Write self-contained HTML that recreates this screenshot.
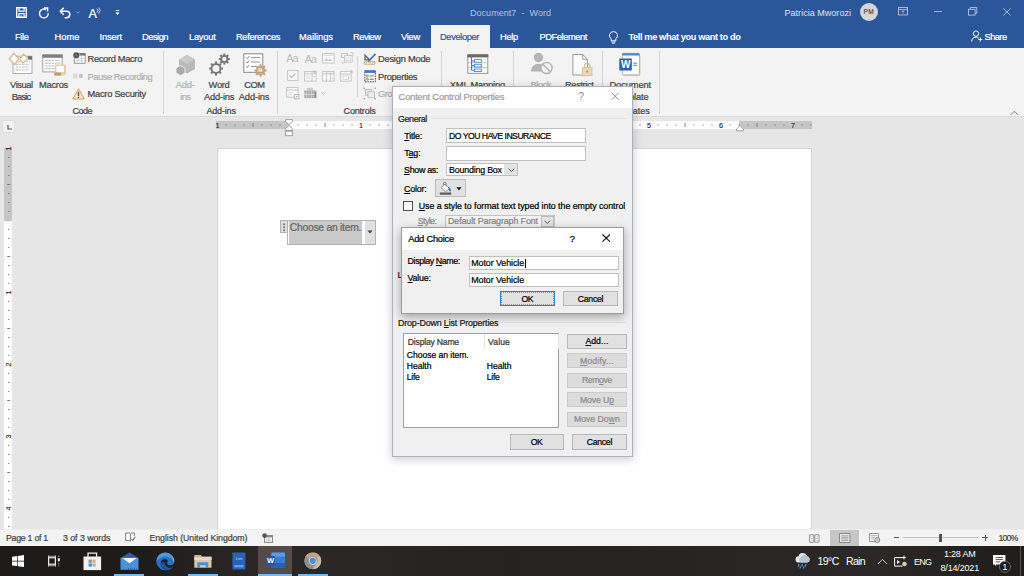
<!DOCTYPE html>
<html>
<head>
<meta charset="utf-8">
<title>Document7 - Word</title>
<style>
*{box-sizing:border-box;margin:0;padding:0}
html,body{width:1024px;height:576px;overflow:hidden;background:#e6e6e6;font-family:"Liberation Sans",sans-serif;font-size:9px;color:#333}
#root{position:relative;width:1024px;height:576px;overflow:hidden}
#root div,#root span,#root svg{position:absolute;white-space:nowrap}
#root svg{overflow:visible}
#root span{-webkit-text-stroke:0.22px currentColor}
#titlebar{left:0;top:0;width:1024px;height:48px;background:#2b579a}
#ribbon{left:0;top:48px;width:1024px;height:69px;background:#f3f3f3;border-bottom:1px solid #dadada}
#docarea{left:0;top:117px;width:1024px;height:412px;background:#e6e6e6}
#status{left:0;top:529px;width:1024px;height:17px;background:#f3f3f3;border-top:1px solid #ededed}
#taskbar{left:0;top:546px;width:1024px;height:30px;background:linear-gradient(90deg,#1d1b1a 0%,#1e1c1b 14%,#282524 22%,#2a2726 32%,#252221 50%,#282524 70%,#2b2827 86%,#211f1e 97%,#1f1d1c 100%)}
u{text-decoration:underline;text-underline-offset:1px;text-decoration-thickness:0.8px}
</style>
</head>
<body>
<div id="root">
<div id="titlebar"></div>
<svg style="left:16.00px;top:7.00px;" width="11" height="11" viewBox="0 0 11 11"><path d="M0.700 0.700h9.600v9.600h-9.600z" fill="none" stroke="#fff" stroke-width="1.400"/><path d="M2.900 0.700v3.400h5.200v-3.400M2.900 10.300v-3.600h5.200v3.600" fill="none" stroke="#fff" stroke-width="1.200"/><path d="M5 8.300v2" stroke="#fff" stroke-width="1.100"/></svg>
<svg style="left:37.50px;top:6.50px;" width="12" height="12" viewBox="0 0 12 12"><path d="M8 2.600A4.400 4.400 0 1 0 10.300 6.300" fill="none" stroke="#fff" stroke-width="1.400"/><path d="M6 1h3.600v3.600" fill="none" stroke="#fff" stroke-width="1.400"/></svg>
<svg style="left:59.00px;top:6.50px;" width="13" height="12" viewBox="0 0 13 12"><path d="M1.400 4.300h6.200a3.200 3.200 0 0 1 0 6.400h-1.900" fill="none" stroke="#fff" stroke-width="1.500"/><path d="M4.700 0.900L1.300 4.300l3.400 3.400" fill="none" stroke="#fff" stroke-width="1.500"/></svg>
<svg style="left:75.50px;top:11.00px;" width="4" height="3" viewBox="0 0 4 3"><path d="M0.300 0.400L2 2.200L3.700 0.400" fill="none" stroke="#8fa6cf" stroke-width="0.8"/></svg>
<span style="left:88.50px;top:7.00px;font-size:12.5px;line-height:15px;color:#fff;letter-spacing:-0.337px;">A</span>
<svg style="left:96.00px;top:6.50px;" width="6" height="8" viewBox="0 0 6 8"><path d="M1 1.5q1.6 2 0 4.2M2.8 0.5q2.4 3 0 6.2" fill="none" stroke="#dfe6f2" stroke-width="0.8"/></svg>
<svg style="left:114.50px;top:10.00px;" width="5" height="6" viewBox="0 0 5 6"><path d="M0.7 0.6h3.6" stroke="#fff" stroke-width="0.9"/><path d="M0.4 2.6h4.2L2.5 5z" fill="#fff"/></svg>
<span style="left:470.00px;top:8.00px;font-size:9px;line-height:11px;color:#b4c3de;letter-spacing:0.035px;white-space:pre;-webkit-text-stroke:0;">Document7  -  Word</span>
<span style="left:784.50px;top:8.00px;font-size:9px;line-height:11px;color:#dde5f1;letter-spacing:0.030px;-webkit-text-stroke:0;">Patricia Mworozi</span>
<div style="left:859.50px;top:2.50px;width:18.00px;height:18.00px;background:#d6d6d6;border-radius:9px;"><span style="left:4.00px;top:5.00px;font-size:6.5px;line-height:8px;color:#555;letter-spacing:0.375px;">PM</span></div>
<svg style="left:898.00px;top:7.00px;" width="10" height="9" viewBox="0 0 10 9"><rect x="0.500" y="0.500" width="9" height="7.400" fill="none" stroke="#b7c4dc" stroke-width="0.9"/><path d="M0.500 2.600h9" stroke="#b7c4dc" stroke-width="0.9"/><path d="M5 3.800v2.800M3.700 5L5 3.700L6.300 5" fill="none" stroke="#b7c4dc" stroke-width="0.7"/></svg>
<div style="left:934.00px;top:11.20px;width:7.50px;height:0.90px;background:#9fb1d2;"></div>
<svg style="left:968.00px;top:7.00px;" width="10" height="9" viewBox="0 0 10 9"><rect x="0.500" y="2.300" width="6.600" height="5.800" fill="none" stroke="#b7c4dc" stroke-width="0.9"/><path d="M2.300 2.300v-1.800h6.500v5.800h-1.700" fill="none" stroke="#b7c4dc" stroke-width="0.9"/></svg>
<svg style="left:1003.00px;top:7.50px;" width="8" height="8" viewBox="0 0 8 8"><path d="M0.300 0.300L7.600 7.600M7.600 0.300L0.300 7.600" stroke="#b7c4dc" stroke-width="0.9"/></svg>
<span style="left:15.00px;top:31.00px;font-size:9.3px;line-height:12px;color:#fff;letter-spacing:-0.371px;">File</span>
<span style="left:54.50px;top:31.00px;font-size:9.3px;line-height:12px;color:#fff;letter-spacing:0.048px;">Home</span>
<span style="left:99.50px;top:31.00px;font-size:9.3px;line-height:12px;color:#fff;letter-spacing:-0.127px;">Insert</span>
<span style="left:142.00px;top:31.00px;font-size:9.3px;line-height:12px;color:#fff;letter-spacing:-0.491px;">Design</span>
<span style="left:189.00px;top:31.00px;font-size:9.3px;line-height:12px;color:#fff;letter-spacing:-0.237px;">Layout</span>
<span style="left:236.00px;top:31.00px;font-size:9.3px;line-height:12px;color:#fff;letter-spacing:-0.356px;">References</span>
<span style="left:299.00px;top:31.00px;font-size:9.3px;line-height:12px;color:#fff;letter-spacing:-0.014px;">Mailings</span>
<span style="left:353.00px;top:31.00px;font-size:9.3px;line-height:12px;color:#fff;letter-spacing:-0.499px;">Review</span>
<span style="left:401.00px;top:31.00px;font-size:9.3px;line-height:12px;color:#fff;letter-spacing:-0.247px;">View</span>
<div style="left:431.00px;top:25.00px;width:59.00px;height:23.00px;background:#f3f3f3;"></div>
<span style="left:440.00px;top:31.00px;font-size:9.3px;line-height:12px;color:#2b579a;letter-spacing:-0.377px;">Developer</span>
<span style="left:500.00px;top:31.00px;font-size:9.3px;line-height:12px;color:#fff;letter-spacing:-0.282px;">Help</span>
<span style="left:539.50px;top:31.00px;font-size:9.3px;line-height:12px;color:#fff;letter-spacing:-0.419px;">PDFelement</span>
<svg style="left:608.30px;top:31.00px;" width="11" height="13" viewBox="0 0 11 13"><path d="M5.500 0.600a4 4 0 0 1 2.300 7.300v1.900h-4.600v-1.900a4 4 0 0 1 2.300-7.300z" fill="none" stroke="#fff" stroke-width="0.95"/><path d="M3.400 11h4.200M4 12.200h3" stroke="#fff" stroke-width="0.8"/></svg>
<span style="left:628.50px;top:31.00px;font-size:9.3px;line-height:12px;color:#fff;letter-spacing:-0.419px;font-weight:bold;-webkit-text-stroke:0;">Tell me what you want to do</span>
<svg style="left:970.50px;top:30.00px;" width="12" height="13" viewBox="0 0 12 13"><circle cx="5" cy="3.6" r="2.7" fill="none" stroke="#fff" stroke-width="0.95"/><path d="M0.6 11.5a4.4 4.4 0 0 1 7.2-3.4" fill="none" stroke="#fff" stroke-width="0.95"/><path d="M9.3 7.5v4M7.3 9.5h4" stroke="#fff" stroke-width="0.95"/></svg>
<span style="left:984.50px;top:31.00px;font-size:9.3px;line-height:12px;color:#fff;letter-spacing:-0.563px;">Share</span>
<div id="ribbon"></div>
<div style="left:163.00px;top:51.00px;width:1.00px;height:63.00px;background:#d5d5d5;"></div>
<div style="left:277.00px;top:51.00px;width:1.00px;height:63.00px;background:#d5d5d5;"></div>
<div style="left:357.00px;top:55.50px;width:1.00px;height:41.00px;background:#d5d5d5;"></div>
<div style="left:441.00px;top:51.00px;width:1.00px;height:63.00px;background:#d5d5d5;"></div>
<div style="left:512.50px;top:51.00px;width:1.00px;height:63.00px;background:#d5d5d5;"></div>
<div style="left:601.50px;top:51.00px;width:1.00px;height:63.00px;background:#d5d5d5;"></div>
<div style="left:659.00px;top:51.00px;width:1.00px;height:63.00px;background:#d5d5d5;"></div>
<svg style="left:9.00px;top:52.00px;" width="24" height="23" viewBox="0 0 24 23"><rect x="4" y="4.200" width="19" height="17.300" fill="#fdfdfd" stroke="#a3a3a3" stroke-width="0.9"/><rect x="18.800" y="4.200" width="4.200" height="3.400" fill="#6f6f6f"/><path d="M6.500 9.500h14M6.500 12.300h14M6.500 15.100h14M6.500 17.900h14" stroke="#c2c2c2" stroke-width="1" stroke-dasharray="2.600 0.700"/><path d="M6.500 12.300h3M6.500 17.900h3" stroke="#e2c48f" stroke-width="1"/><path d="M4.700 1.300L10 6.800L5.400 12.600L0.400 7z" fill="#fffdf9" stroke="#d6bd96" stroke-width="1.300" stroke-linejoin="round"/><path d="M14.700 2.300L18.600 6.400L14.300 11L10.600 6.700z" fill="#fffdf9" stroke="#d6bd96" stroke-width="1.300" stroke-linejoin="round"/></svg>
<span style="left:10.00px;top:79.00px;font-size:9.3px;line-height:12px;color:#444;letter-spacing:-0.394px;">Visual</span>
<span style="left:11.70px;top:91.00px;font-size:9.3px;line-height:12px;color:#444;letter-spacing:-0.788px;">Basic</span>
<svg style="left:42.00px;top:53.50px;" width="25" height="22" viewBox="0 0 25 22"><rect x="0.800" y="0.900" width="19.400" height="17" fill="#fdfdfd" stroke="#9a9a9a" stroke-width="0.9"/><rect x="0.400" y="0.500" width="20.200" height="3.300" fill="#808080"/><path d="M3 6.500h15M3 9.200h15M3 11.900h15M3 14.600h10" stroke="#bdbdbd" stroke-width="1" stroke-dasharray="2.600 0.700"/><path d="M3 9.200h3M3 14.600h3" stroke="#e2c48f" stroke-width="1"/><path d="M13 10.500h11v9l-1.500 2h-10.200v-3z" fill="#e5d0ad"/><rect x="14" y="11.300" width="8.300" height="7.400" fill="#fffdfa" stroke="#dcc6a1" stroke-width="0.8"/><path d="M12.400 18.600h6.600v3h-6.600z" fill="#b99c72"/></svg>
<span style="left:39.00px;top:79.00px;font-size:9.3px;line-height:12px;color:#444;letter-spacing:-0.248px;">Macros</span>
<svg style="left:72.50px;top:52.00px;" width="13" height="12" viewBox="0 0 13 12"><rect x="1.300" y="1.600" width="10.900" height="9.700" fill="#fdfdfd" stroke="#8f8f8f" stroke-width="0.9"/><rect x="6.500" y="1.300" width="6" height="2.300" fill="#777"/><path d="M2 6.300h10M2 8.700h10M5 4v7M8.600 4v7" stroke="#c9c9c9" stroke-width="0.7"/><circle cx="3.300" cy="3.200" r="3" fill="#5b514a"/><circle cx="3.300" cy="3.200" r="1" fill="#8d7f70"/></svg>
<span style="left:87.50px;top:53.00px;font-size:9.3px;line-height:12px;color:#444;letter-spacing:-0.325px;">Record Macro</span>
<svg style="left:73.00px;top:73.00px;" width="11" height="6" viewBox="0 0 11 6"><path d="M1 0.500v5M3.300 0.500v5" stroke="#c4c4c4" stroke-width="1.100"/><circle cx="7.800" cy="3" r="2.200" fill="#c4c4c4"/></svg>
<span style="left:87.50px;top:71.00px;font-size:9.3px;line-height:12px;color:#b1b1b1;letter-spacing:-0.436px;">Pause Recording</span>
<svg style="left:72.00px;top:87.50px;" width="13" height="12" viewBox="0 0 13 12"><path d="M6.500 0.800L12.300 11H0.700z" fill="#f5e3c1" stroke="#c9a671" stroke-width="1"/><path d="M6.500 3.800v4.200" stroke="#555" stroke-width="1.300"/><circle cx="6.500" cy="9.500" r="0.800" fill="#555"/></svg>
<span style="left:87.50px;top:88.00px;font-size:9.3px;line-height:12px;color:#444;letter-spacing:-0.251px;">Macro Security</span>
<span style="left:72.50px;top:106.00px;font-size:9px;line-height:11px;color:#444;letter-spacing:-0.504px;">Code</span>
<svg style="left:174.50px;top:53.50px;" width="21" height="22" viewBox="0 0 21 22"><path d="M12 1L20 5.500V15L12 19.500L4 15V5.500z" fill="#b9b9b9"/><path d="M12 1L20 5.500L12 10L4 5.500z" fill="#cacaca"/><path d="M5.500 11.500L10 14V19L5.500 21.500L1 19V14z" fill="#a9a9a9" stroke="#f3f3f3" stroke-width="0.8"/></svg>
<span style="left:175.80px;top:79.00px;font-size:9.3px;line-height:12px;color:#b1b1b1;letter-spacing:-0.161px;">Add-</span>
<span style="left:180.20px;top:91.00px;font-size:9.3px;line-height:12px;color:#b1b1b1;letter-spacing:-0.529px;">ins</span>
<svg style="left:207.50px;top:52.50px;" width="23" height="24" viewBox="0 0 23 24"><path d="M12.70 15.50L14.90 15.50M11.32 18.82L12.88 20.38M8.00 20.20L8.00 22.40M4.68 18.82L3.12 20.38M3.30 15.50L1.10 15.50M4.68 12.18L3.12 10.62M8.00 10.80L8.00 8.60M11.32 12.18L12.88 10.62" stroke="#787878" stroke-width="2.100"/><circle cx="8" cy="15.5" r="4.5" fill="none" stroke="#787878" stroke-width="1.900"/><path d="M19.60 6.00L21.80 6.00M18.63 8.33L20.19 9.89M16.30 9.30L16.30 11.50M13.97 8.33L12.41 9.89M13.00 6.00L10.80 6.00M13.97 3.67L12.41 2.11M16.30 2.70L16.30 0.50M18.63 3.67L20.19 2.11" stroke="#787878" stroke-width="2.100"/><circle cx="16.3" cy="6" r="3.1" fill="none" stroke="#787878" stroke-width="1.900"/></svg>
<span style="left:208.60px;top:79.00px;font-size:9.3px;line-height:12px;color:#444;letter-spacing:-0.288px;">Word</span>
<span style="left:204.00px;top:91.00px;font-size:9.3px;line-height:12px;color:#444;letter-spacing:-0.190px;">Add-ins</span>
<svg style="left:242.50px;top:52.50px;" width="25" height="25" viewBox="0 0 25 25"><rect x="0.800" y="0.800" width="19" height="18.500" fill="#fdfdfd" stroke="#7d7d7d" stroke-width="0.9"/><path d="M8 4.500h9M8 9h9M8 13.500h5" stroke="#8a8a8a" stroke-width="0.9"/><path d="M3 4.300l1.200 1.200l2-2.400M3 8.800l1.200 1.200l2-2.400M3 13.300l1.200 1.200l2-2.400" fill="none" stroke="#777" stroke-width="0.9"/><path d="M21.50 17.50L23.70 17.50M20.33 20.33L21.88 21.88M17.50 21.50L17.50 23.70M14.67 20.33L13.12 21.88M13.50 17.50L11.30 17.50M14.67 14.67L13.12 13.12M17.50 13.50L17.50 11.30M20.33 14.67L21.88 13.12" stroke="#c3a47a" stroke-width="2.100"/><circle cx="17.5" cy="17.5" r="3.8" fill="none" stroke="#c3a47a" stroke-width="1.900"/><circle cx="17.500" cy="17.500" r="2.300" fill="#c3a47a"/><rect x="16" y="16.500" width="3.200" height="2" fill="#fff"/></svg>
<span style="left:244.20px;top:79.00px;font-size:9.3px;line-height:12px;color:#444;letter-spacing:-0.499px;">COM</span>
<span style="left:238.80px;top:91.00px;font-size:9.3px;line-height:12px;color:#444;letter-spacing:-0.133px;">Add-ins</span>
<span style="left:206.40px;top:106.00px;font-size:9px;line-height:11px;color:#444;letter-spacing:-0.159px;">Add-ins</span>
<span style="left:286.30px;top:52.00px;font-size:10.8px;line-height:13px;color:#bcbcbc;letter-spacing:-0.900px;-webkit-text-stroke:0;">Aa</span>
<span style="left:304.80px;top:53.00px;font-size:10.8px;line-height:13px;color:#bcbcbc;letter-spacing:-0.900px;-webkit-text-stroke:0;">Aa</span>
<svg style="left:322.00px;top:53.00px;" width="13" height="11" viewBox="0 0 13 11"><rect x="0.600" y="0.600" width="11.500" height="9.500" fill="#f8f8f8" stroke="#c2c2c2" stroke-width="0.9"/><path d="M2 8l2.500-3l2 2l1.500-1.500l2.500 2.500z" fill="#cfcfcf"/><path d="M1 2.300h10.500" stroke="#d9d9d9" stroke-width="0.9"/></svg>
<svg style="left:340.50px;top:52.00px;" width="13" height="12" viewBox="0 0 13 12"><rect x="0.600" y="1.600" width="6" height="4" fill="none" stroke="#c2c2c2" stroke-width="0.9"/><rect x="3.600" y="3.600" width="7.500" height="6.500" fill="#f8f8f8" stroke="#c2c2c2" stroke-width="0.9"/><path d="M5 6h4.500v2.500h-4.500z" fill="none" stroke="#d0d0d0" stroke-width="0.7"/><path d="M9 0.800h3v3" fill="none" stroke="#c2c2c2" stroke-width="0.8"/><path d="M0.800 9v2h2.500" fill="none" stroke="#c2c2c2" stroke-width="0.8"/></svg>
<svg style="left:286.50px;top:70.00px;" width="12" height="11" viewBox="0 0 12 11"><rect x="0.600" y="0.600" width="10.300" height="9.800" fill="#f9f9f9" stroke="#c2c2c2" stroke-width="0.95"/><path d="M2.800 5.500l2 2l3.600-4.200" fill="none" stroke="#b4b4b4" stroke-width="1.100"/></svg>
<svg style="left:304.00px;top:69.50px;" width="13" height="12" viewBox="0 0 13 12"><rect x="0.600" y="1.600" width="11.500" height="9.500" fill="#f9f9f9" stroke="#c2c2c2" stroke-width="0.9"/><path d="M0.600 3.800h11.500M8 1.600v9.500" stroke="#c2c2c2" stroke-width="0.9"/><path d="M2 6h4M2 8h4" stroke="#d4d4d4" stroke-width="0.8"/><path d="M9 6l1 1.200l1-1.200z" fill="#aaa"/><rect x="9.500" y="0.300" width="2" height="2.500" fill="#bdbdbd"/></svg>
<svg style="left:322.00px;top:69.50px;" width="13" height="12" viewBox="0 0 13 12"><rect x="0.600" y="1.600" width="11.500" height="9.500" fill="#f9f9f9" stroke="#c2c2c2" stroke-width="0.9"/><path d="M0.600 3.800h11.500M4.500 1.600v9.500M8.500 1.600v9.500" stroke="#c2c2c2" stroke-width="0.9"/><path d="M10 8l0.800 1l0.800-1z" fill="#aaa"/></svg>
<svg style="left:340.00px;top:69.50px;" width="13" height="12" viewBox="0 0 13 12"><rect x="0.600" y="1.600" width="10.500" height="9.500" fill="#f9f9f9" stroke="#c2c2c2" stroke-width="0.9"/><path d="M0.600 4h10.500" stroke="#c2c2c2" stroke-width="0.9"/><rect x="3" y="5.800" width="5.500" height="3.500" fill="none" stroke="#cfcfcf" stroke-width="0.8"/><rect x="10.300" y="0.300" width="2.200" height="2.500" fill="#c6c6c6"/></svg>
<svg style="left:286.00px;top:86.50px;" width="14" height="13" viewBox="0 0 14 13"><rect x="0.600" y="0.600" width="11.500" height="9.500" fill="#f9f9f9" stroke="#c2c2c2" stroke-width="0.9"/><path d="M0.600 3h11.500" stroke="#c2c2c2" stroke-width="0.9"/><path d="M2 5.500h5M2 7.500h4" stroke="#d9d9d9" stroke-width="0.8"/><rect x="8.600" y="7.600" width="4.300" height="4.300" fill="#f3f3f3" stroke="#b6b6b6" stroke-width="0.9"/><path d="M9.600 9.300l1.200 1.400l1.200-1.400z" fill="#a8a8a8"/></svg>
<svg style="left:304.00px;top:86.50px;" width="13" height="12" viewBox="0 0 13 12"><rect x="3.800" y="1.200" width="4.600" height="1.600" fill="none" stroke="#b0b0b0" stroke-width="0.7"/><rect x="0.300" y="3.400" width="12" height="3.500" fill="#a9a9a9"/><rect x="0.300" y="7.600" width="12" height="3.500" fill="#a9a9a9"/><path d="M2.500 3.400v7.700M5 3.400v7.700M7.500 3.400v7.700M10 3.400v7.700" stroke="#dedede" stroke-width="0.6"/><rect x="10.600" y="5" width="1.700" height="6" fill="#8d8d8d"/></svg>
<svg style="left:320.50px;top:92.00px;" width="5" height="3" viewBox="0 0 5 3"><path d="M0.400 0.400L2.400 2.400L4.400 0.400" fill="none" stroke="#bdbdbd" stroke-width="0.8"/></svg>
<svg style="left:363.00px;top:52.00px;" width="14" height="13" viewBox="0 0 14 13"><path d="M1.500 9.800h10.500v2.400h-10.500z" fill="#fbf1de" stroke="#c9a671" stroke-width="0.9"/><path d="M3.500 9.800v1.200M5.500 9.800v1.200M7.500 9.800v1.200M9.500 9.800v1.200" stroke="#c9a671" stroke-width="0.6"/><path d="M1.300 1.500v7h7z" fill="#6b6b6b"/><path d="M2.700 5v2.200h2.200z" fill="#f3f3f3"/><path d="M5.500 8L11.800 1.200l1.300 1.200L6.800 9.200z" fill="#3b7bd0"/><path d="M5.500 8l-0.500 1.700l1.800-0.500z" fill="#555"/></svg>
<span style="left:378.00px;top:53.00px;font-size:9.3px;line-height:12px;color:#444;letter-spacing:-0.227px;">Design Mode</span>
<svg style="left:363.50px;top:69.50px;" width="13" height="13" viewBox="0 0 13 13"><rect x="0.900" y="0.900" width="10.400" height="10.900" fill="#fdfdfd" stroke="#4e4e4e" stroke-width="1" stroke-dasharray="1.700 0.800"/><rect x="0.400" y="0.400" width="11.400" height="2.500" fill="#3f74c8"/><circle cx="3.400" cy="6" r="1" fill="none" stroke="#555" stroke-width="0.7"/><circle cx="3.400" cy="9.200" r="1" fill="none" stroke="#555" stroke-width="0.7"/><path d="M5.700 6h4M5.700 9.200h4" stroke="#555" stroke-width="0.9"/></svg>
<span style="left:378.00px;top:71.00px;font-size:9.3px;line-height:12px;color:#444;letter-spacing:-0.319px;">Properties</span>
<svg style="left:363.00px;top:86.50px;" width="14" height="13" viewBox="0 0 14 13"><rect x="2.300" y="2.300" width="6.500" height="6" fill="#e3e3e3" stroke="#bdbdbd" stroke-width="0.9"/><rect x="5" y="4.800" width="6.500" height="6" fill="#ececec" stroke="#bdbdbd" stroke-width="0.9"/><path d="M0.500 0.500h1.500v1.500h-1.500zM11.500 0.500h1.500v1.500h-1.500zM0.500 11h1.500v1.500h-1.500zM11.500 11h1.500v1.500h-1.500z" fill="#b0b0b0"/></svg>
<span style="left:378.00px;top:88.00px;font-size:9.3px;line-height:12px;color:#b1b1b1;letter-spacing:-0.570px;">Group</span>
<span style="left:343.60px;top:106.00px;font-size:9px;line-height:11px;color:#444;letter-spacing:-0.189px;">Controls</span>
<svg style="left:467.00px;top:53.50px;" width="22" height="21" viewBox="0 0 22 21"><rect x="0.800" y="0.800" width="20" height="18.500" fill="#fdfdfd" stroke="#8a8a8a" stroke-width="0.9"/><rect x="0.400" y="0.400" width="20.800" height="3" fill="#6a6a6a"/><path d="M0.800 8.800h20M0.800 13.600h20" stroke="#b9b9b9" stroke-width="0.8"/><path d="M4.500 1.500v15M4.500 7h3M4.500 11.600h3M4.500 16.200h3" fill="none" stroke="#3b7bd0" stroke-width="1.100"/><rect x="7.500" y="5.600" width="7" height="2.600" fill="#fff" stroke="#3b7bd0" stroke-width="0.8"/><rect x="7.500" y="10.300" width="7" height="2.600" fill="#fff" stroke="#3b7bd0" stroke-width="0.8"/><rect x="7.500" y="15" width="7" height="2.600" fill="#fff" stroke="#3b7bd0" stroke-width="0.8"/></svg>
<span style="left:449.80px;top:79.00px;font-size:9.3px;line-height:12px;color:#444;letter-spacing:-0.167px;">XML Mapping</span>
<span style="left:468.00px;top:91.00px;font-size:9.3px;line-height:12px;color:#444;letter-spacing:-0.430px;">Pane</span>
<span style="left:460.00px;top:106.00px;font-size:9px;line-height:11px;color:#444;letter-spacing:0.068px;">Mapping</span>
<svg style="left:529.50px;top:52.00px;" width="24" height="23" viewBox="0 0 24 23"><circle cx="8.500" cy="5.500" r="4.700" fill="#b5b5b5"/><path d="M0.800 19.500a7.700 7.700 0 0 1 15.400 0z" fill="#b5b5b5"/><circle cx="16.500" cy="16" r="5.600" fill="#f3f3f3" stroke="#b5b5b5" stroke-width="1.500"/><path d="M12.700 12.200L20.300 19.800" stroke="#b5b5b5" stroke-width="1.500"/></svg>
<span style="left:530.50px;top:79.00px;font-size:9.3px;line-height:12px;color:#b1b1b1;letter-spacing:-0.488px;">Block</span>
<span style="left:525.00px;top:91.00px;font-size:9.3px;line-height:12px;color:#b1b1b1;letter-spacing:-0.007px;">Authors</span>
<svg style="left:571.50px;top:52.50px;" width="22" height="24" viewBox="0 0 22 24"><path d="M0.900 1.500h9.800l4.800 4.800V22H0.900z" fill="#fdfdfd" stroke="#919191" stroke-width="0.9"/><path d="M10.700 1.500v4.800h4.800" fill="none" stroke="#919191" stroke-width="0.9"/><rect x="10.300" y="14.600" width="9.700" height="8.200" fill="#ead9b8" stroke="#d2bd95" stroke-width="0.8"/><path d="M12.600 14.600v-1.600a2.600 2.600 0 0 1 5.200 0v1.600" fill="none" stroke="#d2bd95" stroke-width="1.200"/><circle cx="15.200" cy="18.600" r="1.100" fill="#b89b6c"/></svg>
<span style="left:565.00px;top:79.00px;font-size:9.3px;line-height:12px;color:#444;letter-spacing:-0.377px;">Restrict</span>
<span style="left:566.00px;top:91.00px;font-size:9.3px;line-height:12px;color:#444;letter-spacing:-0.348px;">Editing</span>
<span style="left:544.00px;top:106.00px;font-size:9px;line-height:11px;color:#444;letter-spacing:-0.073px;">Protect</span>
<svg style="left:619.00px;top:52.00px;" width="22" height="24" viewBox="0 0 22 24"><rect x="3.300" y="1.300" width="17.200" height="21.600" rx="1" fill="#fdfdfd" stroke="#9a9a9a" stroke-width="0.8"/><path d="M3.300 2.300a1 1 0 0 1 1-1h15.200a1 1 0 0 1 1 1v1.300H3.300z" fill="#4a86d8"/><path d="M14.200 11.200h4M14.200 13.300h4" stroke="#3b7bd0" stroke-width="0.9"/><path d="M20.900 4v18.500a1 1 0 0 1-1 0.900H6" fill="none" stroke="#cfb78d" stroke-width="0.8"/><rect x="0.300" y="6.500" width="12.500" height="12" fill="#2d5fb3"/></svg>
<span style="left:621.00px;top:59.00px;font-size:10px;line-height:12px;color:#fff;letter-spacing:0.362px;font-weight:bold;-webkit-text-stroke:0;">W</span>
<span style="left:609.50px;top:79.00px;font-size:9.3px;line-height:12px;color:#444;letter-spacing:-0.111px;">Document</span>
<span style="left:611.60px;top:91.00px;font-size:9.3px;line-height:12px;color:#444;letter-spacing:-0.092px;">Template</span>
<span style="left:609.00px;top:106.00px;font-size:9px;line-height:11px;color:#444;letter-spacing:-0.035px;">Templates</span>
<svg style="left:1009.50px;top:110.00px;" width="9" height="6" viewBox="0 0 9 6"><path d="M0.800 4.800L4.400 1.200L8 4.800" fill="none" stroke="#6a6a6a" stroke-width="0.9"/></svg>
<div id="docarea"></div>
<div style="left:2.00px;top:120.00px;width:13.00px;height:13.00px;background:#f1f1f1;border:1px solid #dedede;"><svg style="left:3.50px;top:3.50px;" width="5" height="5" viewBox="0 0 5 5"><path d="M1 0v4h4" fill="none" stroke="#555" stroke-width="1.200"/></svg></div>
<div style="left:216.00px;top:121.20px;width:596.00px;height:8.00px;background:#fff;"></div>
<div style="left:216.00px;top:121.20px;width:73.00px;height:8.00px;background:#c6c6c6;"></div>
<div style="left:738.70px;top:121.20px;width:73.30px;height:8.00px;background:#c6c6c6;"></div>
<svg style="left:216.00px;top:121.20px;" width="596" height="8" viewBox="0 0 596 8"><rect x="9.5" y="3.500" width="1" height="1.200" fill="#777"/><rect x="18.5" y="3.500" width="1" height="1.200" fill="#777"/><rect x="27.5" y="3.500" width="1" height="1.200" fill="#777"/><rect x="36.6" y="2" width="0.9" height="4" fill="#777"/><rect x="45.5" y="3.500" width="1" height="1.200" fill="#777"/><rect x="54.5" y="3.500" width="1" height="1.200" fill="#777"/><rect x="63.5" y="3.500" width="1" height="1.200" fill="#777"/><rect x="81.5" y="3.500" width="1" height="1.200" fill="#777"/><rect x="90.5" y="3.500" width="1" height="1.200" fill="#777"/><rect x="99.5" y="3.500" width="1" height="1.200" fill="#777"/><rect x="108.6" y="2" width="0.9" height="4" fill="#777"/><rect x="117.5" y="3.500" width="1" height="1.200" fill="#777"/><rect x="126.5" y="3.500" width="1" height="1.200" fill="#777"/><rect x="135.5" y="3.500" width="1" height="1.200" fill="#777"/><rect x="153.5" y="3.500" width="1" height="1.200" fill="#777"/><rect x="162.5" y="3.500" width="1" height="1.200" fill="#777"/><rect x="171.5" y="3.500" width="1" height="1.200" fill="#777"/><rect x="180.6" y="2" width="0.9" height="4" fill="#777"/><rect x="189.5" y="3.500" width="1" height="1.200" fill="#777"/><rect x="198.5" y="3.500" width="1" height="1.200" fill="#777"/><rect x="207.5" y="3.500" width="1" height="1.200" fill="#777"/><rect x="225.5" y="3.500" width="1" height="1.200" fill="#777"/><rect x="234.5" y="3.500" width="1" height="1.200" fill="#777"/><rect x="243.5" y="3.500" width="1" height="1.200" fill="#777"/><rect x="252.6" y="2" width="0.9" height="4" fill="#777"/><rect x="261.5" y="3.500" width="1" height="1.200" fill="#777"/><rect x="270.5" y="3.500" width="1" height="1.200" fill="#777"/><rect x="279.5" y="3.500" width="1" height="1.200" fill="#777"/><rect x="297.5" y="3.500" width="1" height="1.200" fill="#777"/><rect x="306.5" y="3.500" width="1" height="1.200" fill="#777"/><rect x="315.5" y="3.500" width="1" height="1.200" fill="#777"/><rect x="324.6" y="2" width="0.9" height="4" fill="#777"/><rect x="333.5" y="3.500" width="1" height="1.200" fill="#777"/><rect x="342.5" y="3.500" width="1" height="1.200" fill="#777"/><rect x="351.5" y="3.500" width="1" height="1.200" fill="#777"/><rect x="369.5" y="3.500" width="1" height="1.200" fill="#777"/><rect x="378.5" y="3.500" width="1" height="1.200" fill="#777"/><rect x="387.5" y="3.500" width="1" height="1.200" fill="#777"/><rect x="396.6" y="2" width="0.9" height="4" fill="#777"/><rect x="405.5" y="3.500" width="1" height="1.200" fill="#777"/><rect x="414.5" y="3.500" width="1" height="1.200" fill="#777"/><rect x="423.5" y="3.500" width="1" height="1.200" fill="#777"/><rect x="441.5" y="3.500" width="1" height="1.200" fill="#777"/><rect x="450.5" y="3.500" width="1" height="1.200" fill="#777"/><rect x="459.5" y="3.500" width="1" height="1.200" fill="#777"/><rect x="468.6" y="2" width="0.9" height="4" fill="#777"/><rect x="477.5" y="3.500" width="1" height="1.200" fill="#777"/><rect x="486.5" y="3.500" width="1" height="1.200" fill="#777"/><rect x="495.5" y="3.500" width="1" height="1.200" fill="#777"/><rect x="513.5" y="3.500" width="1" height="1.200" fill="#777"/><rect x="522.5" y="3.500" width="1" height="1.200" fill="#777"/><rect x="531.5" y="3.500" width="1" height="1.200" fill="#777"/><rect x="540.6" y="2" width="0.9" height="4" fill="#777"/><rect x="549.5" y="3.500" width="1" height="1.200" fill="#777"/><rect x="558.5" y="3.500" width="1" height="1.200" fill="#777"/><rect x="567.5" y="3.500" width="1" height="1.200" fill="#777"/><rect x="585.5" y="3.500" width="1" height="1.200" fill="#777"/><rect x="594.5" y="3.500" width="1" height="1.200" fill="#777"/><text x="1.5" y="6.800" font-size="7.200" fill="#2a2a2a" stroke="#2a2a2a" stroke-width="0.150" text-anchor="middle" font-family="Liberation Sans, sans-serif">1</text><text x="145.0" y="6.800" font-size="7.200" fill="#2a2a2a" stroke="#2a2a2a" stroke-width="0.150" text-anchor="middle" font-family="Liberation Sans, sans-serif">1</text><text x="217.0" y="6.800" font-size="7.200" fill="#2a2a2a" stroke="#2a2a2a" stroke-width="0.150" text-anchor="middle" font-family="Liberation Sans, sans-serif">2</text><text x="289.0" y="6.800" font-size="7.200" fill="#2a2a2a" stroke="#2a2a2a" stroke-width="0.150" text-anchor="middle" font-family="Liberation Sans, sans-serif">3</text><text x="361.0" y="6.800" font-size="7.200" fill="#2a2a2a" stroke="#2a2a2a" stroke-width="0.150" text-anchor="middle" font-family="Liberation Sans, sans-serif">4</text><text x="433.0" y="6.800" font-size="7.200" fill="#2a2a2a" stroke="#2a2a2a" stroke-width="0.150" text-anchor="middle" font-family="Liberation Sans, sans-serif">5</text><text x="505.0" y="6.800" font-size="7.200" fill="#2a2a2a" stroke="#2a2a2a" stroke-width="0.150" text-anchor="middle" font-family="Liberation Sans, sans-serif">6</text><text x="577.0" y="6.800" font-size="7.200" fill="#2a2a2a" stroke="#2a2a2a" stroke-width="0.150" text-anchor="middle" font-family="Liberation Sans, sans-serif">7</text></svg>
<svg style="left:285.00px;top:118.50px;" width="8" height="18" viewBox="0 0 8 18"><path d="M0.600 0.600h6.800v1.800L4 5.800L0.600 2.400z" fill="#fff" stroke="#8c8c8c" stroke-width="0.8"/><path d="M4 6.400L7.400 9.800v1.700H0.600V9.800z" fill="#fff" stroke="#8c8c8c" stroke-width="0.8"/><rect x="0.600" y="12.200" width="6.800" height="4.500" fill="#fff" stroke="#8c8c8c" stroke-width="0.8"/></svg>
<svg style="left:735.50px;top:124.50px;" width="8" height="7" viewBox="0 0 8 7"><path d="M4 0.600L7.400 4v1.800H0.600V4z" fill="#fff" stroke="#8c8c8c" stroke-width="0.8"/></svg>
<div style="left:3.80px;top:147.50px;width:8.00px;height:381.50px;background:#fff;"></div>
<div style="left:3.80px;top:147.50px;width:8.00px;height:73.50px;background:#c6c6c6;"></div>
<svg style="left:5.00px;top:146.80px;" width="8" height="382" viewBox="0 0 8 382"><text transform="translate(6.300 1.5) rotate(-90)" x="0" y="0" font-size="7.200" fill="#2a2a2a" stroke="#2a2a2a" stroke-width="0.150" text-anchor="middle" font-family="Liberation Sans, sans-serif">1</text><rect x="3.200" y="10.0" width="1.200" height="1" fill="#777"/><rect x="3.200" y="19.0" width="1.200" height="1" fill="#777"/><rect x="3.200" y="28.0" width="1.200" height="1" fill="#777"/><rect x="2.200" y="37.1" width="3.200" height="0.9" fill="#777"/><rect x="3.200" y="46.0" width="1.200" height="1" fill="#777"/><rect x="3.200" y="55.0" width="1.200" height="1" fill="#777"/><rect x="3.200" y="64.0" width="1.200" height="1" fill="#777"/><rect x="3.200" y="82.0" width="1.200" height="1" fill="#777"/><rect x="3.200" y="91.0" width="1.200" height="1" fill="#777"/><rect x="3.200" y="100.0" width="1.200" height="1" fill="#777"/><rect x="2.200" y="109.1" width="3.200" height="0.9" fill="#777"/><rect x="3.200" y="118.0" width="1.200" height="1" fill="#777"/><rect x="3.200" y="127.0" width="1.200" height="1" fill="#777"/><rect x="3.200" y="136.0" width="1.200" height="1" fill="#777"/><text transform="translate(6.300 145.5) rotate(-90)" x="0" y="0" font-size="7.200" fill="#2a2a2a" stroke="#2a2a2a" stroke-width="0.150" text-anchor="middle" font-family="Liberation Sans, sans-serif">1</text><rect x="3.200" y="154.0" width="1.200" height="1" fill="#777"/><rect x="3.200" y="163.0" width="1.200" height="1" fill="#777"/><rect x="3.200" y="172.0" width="1.200" height="1" fill="#777"/><rect x="2.200" y="181.1" width="3.200" height="0.9" fill="#777"/><rect x="3.200" y="190.0" width="1.200" height="1" fill="#777"/><rect x="3.200" y="199.0" width="1.200" height="1" fill="#777"/><rect x="3.200" y="208.0" width="1.200" height="1" fill="#777"/><text transform="translate(6.300 217.5) rotate(-90)" x="0" y="0" font-size="7.200" fill="#2a2a2a" stroke="#2a2a2a" stroke-width="0.150" text-anchor="middle" font-family="Liberation Sans, sans-serif">2</text><rect x="3.200" y="226.0" width="1.200" height="1" fill="#777"/><rect x="3.200" y="235.0" width="1.200" height="1" fill="#777"/><rect x="3.200" y="244.0" width="1.200" height="1" fill="#777"/><rect x="2.200" y="253.1" width="3.200" height="0.9" fill="#777"/><rect x="3.200" y="262.0" width="1.200" height="1" fill="#777"/><rect x="3.200" y="271.0" width="1.200" height="1" fill="#777"/><rect x="3.200" y="280.0" width="1.200" height="1" fill="#777"/><text transform="translate(6.300 289.5) rotate(-90)" x="0" y="0" font-size="7.200" fill="#2a2a2a" stroke="#2a2a2a" stroke-width="0.150" text-anchor="middle" font-family="Liberation Sans, sans-serif">3</text><rect x="3.200" y="298.0" width="1.200" height="1" fill="#777"/><rect x="3.200" y="307.0" width="1.200" height="1" fill="#777"/><rect x="3.200" y="316.0" width="1.200" height="1" fill="#777"/><rect x="2.200" y="325.1" width="3.200" height="0.9" fill="#777"/><rect x="3.200" y="334.0" width="1.200" height="1" fill="#777"/><rect x="3.200" y="343.0" width="1.200" height="1" fill="#777"/><rect x="3.200" y="352.0" width="1.200" height="1" fill="#777"/><text transform="translate(6.300 361.5) rotate(-90)" x="0" y="0" font-size="7.200" fill="#2a2a2a" stroke="#2a2a2a" stroke-width="0.150" text-anchor="middle" font-family="Liberation Sans, sans-serif">4</text><rect x="3.200" y="370.0" width="1.200" height="1" fill="#777"/><rect x="3.200" y="379.0" width="1.200" height="1" fill="#777"/></svg>
<div style="left:217.00px;top:148.40px;width:595.00px;height:380.60px;background:#fff;border:1px solid #d4d4d4;border-bottom:none;"></div>
<div style="left:280.00px;top:220.00px;width:7.50px;height:12.50px;background:#dedede;border:1px solid #b3b3b3;"><svg style="left:2.00px;top:1.50px;" width="3" height="9" viewBox="0 0 3 9"><rect x="0.300" y="0.500" width="1.600" height="1.600" fill="#666"/><rect x="0.300" y="3.500" width="1.600" height="1.600" fill="#666"/><rect x="0.300" y="6.500" width="1.600" height="1.600" fill="#666"/></svg></div>
<div style="left:287.00px;top:220.00px;width:88.50px;height:24.50px;background:#fff;border:1px solid #b3b3b3;"></div>
<div style="left:289.00px;top:221.00px;width:72.50px;height:22.50px;background:#c9c9c9;"></div>
<span style="left:289.80px;top:221.00px;font-size:10.3px;line-height:13px;color:#646464;letter-spacing:-0.240px;">Choose an item.</span>
<div style="left:364.50px;top:221.00px;width:10.00px;height:22.50px;background:#e0e0e0;"></div>
<svg style="left:366.50px;top:230.00px;" width="6" height="4" viewBox="0 0 6 4"><path d="M0.400 0.500h5.200L3 3.400z" fill="#444"/></svg>
<div id="status"></div>
<span style="left:6.00px;top:533.00px;font-size:8.8px;line-height:11px;color:#444;letter-spacing:-0.274px;">Page 1 of 1</span>
<span style="left:63.00px;top:533.00px;font-size:8.8px;line-height:11px;color:#444;letter-spacing:-0.036px;">3 of 3 words</span>
<svg style="left:125.00px;top:532.30px;" width="11" height="11" viewBox="0 0 11 11"><path d="M0.600 1h3.800l1 0.900v7.600l-1-0.900h-3.800z" fill="#fafafa" stroke="#6f6f6f" stroke-width="0.85"/><path d="M5.400 1.900l1-0.900h3v3.200" fill="none" stroke="#6f6f6f" stroke-width="0.85"/><path d="M6.300 6.800l1.400 1.700l2.600-3.600" fill="none" stroke="#555" stroke-width="1"/></svg>
<span style="left:149.50px;top:533.00px;font-size:8.8px;line-height:11px;color:#444;letter-spacing:-0.074px;">English (United Kingdom)</span>
<svg style="left:262.00px;top:533.00px;" width="11" height="10" viewBox="0 0 11 10"><rect x="2.600" y="2.600" width="7.800" height="6.800" fill="#fafafa" stroke="#777" stroke-width="0.9"/><rect x="2.600" y="2.600" width="7.800" height="1.800" fill="#8a8a8a"/><path d="M4.500 6h4.500M4.500 7.800h4.500" stroke="#aaa" stroke-width="0.7"/><circle cx="2.600" cy="2.600" r="2.300" fill="#555"/></svg>
<svg style="left:809.00px;top:533.50px;" width="11" height="9" viewBox="0 0 11 9"><path d="M0.600 0.800h4.200v7.400h-4.200zM5.800 0.800h4.200v7.400h-4.200z" fill="#fafafa" stroke="#7a7a7a" stroke-width="0.8"/><path d="M1.600 2.800h2.200M1.600 4.500h2.200M1.600 6.200h2.200M6.800 2.800h2.200M6.800 4.500h2.200M6.800 6.200h2.200" stroke="#aaa" stroke-width="0.6"/></svg>
<div style="left:830.00px;top:529.50px;width:29.00px;height:16.50px;background:#c6c6c6;"></div>
<svg style="left:839.00px;top:533.00px;" width="12" height="10" viewBox="0 0 12 10"><rect x="0.600" y="0.600" width="10.300" height="8.800" fill="#e9e9e9" stroke="#777" stroke-width="0.8"/><path d="M2.300 2.800h7M2.300 4.400h7M2.300 6h7M2.300 7.600h7" stroke="#888" stroke-width="0.7"/></svg>
<svg style="left:868.50px;top:533.00px;" width="12" height="10" viewBox="0 0 12 10"><rect x="0.600" y="0.600" width="8.800" height="7.800" fill="#fafafa" stroke="#777" stroke-width="0.8"/><path d="M2 2.600h6M2 4.300h4M2 6h3" stroke="#999" stroke-width="0.7"/><circle cx="8.300" cy="7" r="2.500" fill="#f3f3f3" stroke="#666" stroke-width="0.8"/><path d="M5.800 7h5M8.300 4.500v5" stroke="#888" stroke-width="0.5"/></svg>
<div style="left:894.00px;top:537.30px;width:5.00px;height:1.00px;background:#555;"></div>
<div style="left:903.00px;top:537.40px;width:75.00px;height:0.90px;background:#c2c2c2;"></div>
<div style="left:939.00px;top:533.50px;width:3.00px;height:8.50px;background:#555;"></div>
<div style="left:982.00px;top:537.30px;width:6.00px;height:1.00px;background:#555;"></div>
<div style="left:984.50px;top:534.80px;width:1.00px;height:6.00px;background:#555;"></div>
<span style="left:998.50px;top:533.00px;font-size:8.8px;line-height:11px;color:#444;letter-spacing:-0.877px;">100%</span>
<div id="taskbar"></div>
<svg style="left:12.00px;top:555.00px;" width="12" height="12" viewBox="0 0 12 12"><path d="M0 1.700L5.200 1v4.700H0zM5.900 0.900L12 0v5.700H5.900zM0 6.400h5.200v4.700L0 10.400zM5.900 6.400H12v5.700l-6.100-0.900z" fill="#fff"/></svg>
<svg style="left:47.00px;top:554.50px;" width="14" height="12" viewBox="0 0 14 12"><rect x="1.600" y="2.800" width="6.800" height="6.400" fill="none" stroke="#fff" stroke-width="1.100"/><path d="M1.600 0.500v11M8.400 0.500v11" stroke="#e8e8e8" stroke-width="0.9"/><path d="M1 1.300h8M1 10.700h8" stroke="#cfcfcf" stroke-width="0.8"/><path d="M11.800 0.500v11" stroke="#bdbdbd" stroke-width="0.8" stroke-dasharray="1.500 1"/><rect x="10.800" y="3.500" width="2" height="2.400" fill="#fff"/></svg>
<svg style="left:82.50px;top:551.50px;" width="19" height="19" viewBox="0 0 19 19"><path d="M5 4.800V1.200h8.600v3.600" fill="none" stroke="#efefef" stroke-width="1.300"/><path d="M0.500 4.500h17.600v13.600H0.500z" fill="#f2f2f2"/><rect x="5.600" y="7.600" width="3.200" height="3.200" fill="#8a8f98"/><rect x="9.400" y="7.600" width="3.200" height="3.200" fill="#c9b48f"/><rect x="5.600" y="11.400" width="3.200" height="3.200" fill="#3f8ddb"/><rect x="9.400" y="11.400" width="3.200" height="3.200" fill="#b9b3a6"/></svg>
<svg style="left:119.50px;top:551.50px;" width="19" height="19" viewBox="0 0 19 19"><path d="M0.500 6L9.500 0.500L18.500 6z" fill="#2a5fb2"/><path d="M0.500 5.800h18v12H0.500z" fill="#4a90de"/><path d="M2.300 5.900h14.400L9.500 11.300z" fill="#f7f9fc"/><path d="M8.500 17.800v-1.600M10.500 17.800v-2M12.500 17.800v-1.600M14.500 17.800v-2M16.500 17.800v-1.400" stroke="#2a5fb2" stroke-width="0.9"/></svg>
<div style="left:114.00px;top:574.00px;width:30.00px;height:2.00px;background:#76b9ed;"></div>
<svg style="left:156.00px;top:551.80px;" width="19" height="19" viewBox="0 0 19 19"><path d="M9.300 0.400a9 9 0 0 1 9 8.800c0 2.600-2 4-4 4c-2.200 0-3.600-1-3.300-2.400c0.300-0.900 1-1.300 0.600-2.300c-0.500-1-1.700-1.500-3-1.400c-3 0.300-4.500 3.300-3.600 6.300c0.800 2.500 3 4.300 5.600 4.800A9.100 9.100 0 0 1 0.300 9.400A9 9 0 0 1 9.300 0.400z" fill="#2a6fc4"/><path d="M9.300 0.400a9 9 0 0 1 9 8.800c0 1-0.300 1.800-0.800 2.500c0.400-3.600-2.700-7.300-7.700-7.300c-4.600 0-8.200 2.600-9.400 5.400A9 9 0 0 1 9.300 0.400z" fill="#4a9ae0"/><path d="M5 13.400c0.800 2.500 3 4.300 5.600 4.800c2.800 0 5.300-1.300 6.800-3.400c-1.400 0.900-3.400 1.200-5.200 0.600c-2.300-0.800-3.800-3-3.500-5.300c-2.600 0.200-4.400 1.500-3.700 3.300z" fill="#1d55a5"/><path d="M14 4.500c2.200 0.800 3.800 2.800 3.600 5.200c0.400-0.600 0.700-1.400 0.700-2.200c-0.600-1.600-2.200-2.800-4.300-3z" fill="#9aa3a8"/></svg>
<svg style="left:193.50px;top:553.80px;" width="18" height="14" viewBox="0 0 18 14"><path d="M0.300 1h6.500l1.300 1.400h9.400v3H0.300z" fill="#cdb594"/><path d="M0.300 3.400h17.200v10.300H0.300z" fill="#dcc8a8"/><path d="M0.300 3.400h17.200v2.400H0.300z" fill="#e9dcc6"/><path d="M3.300 8.300h11v5.400h-2.600v-2.500h-5.800v2.500H3.300z" fill="#4b8fdc"/></svg>
<div style="left:187.50px;top:574.00px;width:30.00px;height:2.00px;background:#76b9ed;"></div>
<svg style="left:231.50px;top:551.50px;" width="14" height="18" viewBox="0 0 14 18"><rect x="0.400" y="0.400" width="13" height="17.200" rx="0.800" fill="#2a62b9"/><rect x="2.300" y="13" width="9.400" height="2.300" fill="#5d9fe6"/><text x="7" y="8.300" font-size="4.200" fill="#bcd4f3" text-anchor="middle" font-family="Liberation Sans, sans-serif">Lim</text></svg>
<div style="left:257.70px;top:546.00px;width:34.00px;height:30.00px;background:#554c4a;"></div>
<svg style="left:266.00px;top:552.00px;" width="20" height="17" viewBox="0 0 20 17"><rect x="5.400" y="0.600" width="13.600" height="14.800" rx="0.800" fill="#3a7bd0"/><rect x="5.400" y="0.600" width="13.600" height="4" fill="#5c9ae2"/><rect x="5.400" y="11" width="13.600" height="4.400" fill="#2a5fb4"/><rect x="0.400" y="4" width="8.400" height="9" rx="0.600" fill="#1f56ad"/><text x="4.600" y="11.400" font-size="7.500" font-weight="bold" fill="#fff" text-anchor="middle" font-family="Liberation Sans, sans-serif">W</text></svg>
<div style="left:257.70px;top:574.00px;width:34.00px;height:2.00px;background:#76b9ed;"></div>
<svg style="left:304.00px;top:551.80px;" width="18" height="18" viewBox="0 0 18 18"><circle cx="8.800" cy="8.800" r="8.400" fill="#a89a8c"/><path d="M8.800 0.400a8.400 8.400 0 0 1 7.300 4.200H8.800a4.200 4.200 0 0 0-3.900 2.700L1.800 4A8.400 8.400 0 0 1 8.800 0.400z" fill="#b7a48f"/><path d="M16.100 4.600a8.400 8.400 0 0 1-6.900 12.600l3.400-5.900a4.200 4.200 0 0 0-0.500-6.700z" fill="#cbbba2"/><path d="M1.800 4l3.100 5.400a4.200 4.200 0 0 0 4.700 3.500l-1.600 4.200A8.400 8.400 0 0 1 1.800 4z" fill="#8a8d92"/><circle cx="8.800" cy="8.800" r="3.900" fill="#d9d4cc"/><circle cx="8.800" cy="8.800" r="3.100" fill="#4a8fe0"/></svg>
<div style="left:297.50px;top:574.00px;width:30.00px;height:2.00px;background:#76b9ed;"></div>
<svg style="left:793.50px;top:553.00px;" width="17" height="16" viewBox="0 0 17 16"><path d="M4 9.500a3.200 3.200 0 0 1 0.500-6.300a4.400 4.400 0 0 1 8.300-0.300a3.400 3.400 0 0 1 0.500 6.600z" fill="#e4e8ee"/><path d="M7 9.500a2.800 2.800 0 0 1 0.300-5.400a3.500 3.500 0 0 1 6.700 0.500a2.500 2.500 0 0 1-0.500 4.900z" fill="#b9c2cf"/><path d="M5 11l-0.800 2.500M8.500 11l-0.800 2.500M12 11l-0.800 2.500M6.500 13.500l-0.500 1.800M10 13.500l-0.500 1.800" stroke="#4aa3f0" stroke-width="1.200"/></svg>
<span style="left:817.50px;top:555.00px;font-size:10.5px;line-height:13px;color:#fff;letter-spacing:-0.565px;-webkit-text-stroke:0;">19°C</span>
<span style="left:846.00px;top:555.00px;font-size:10.5px;line-height:13px;color:#fff;letter-spacing:-0.649px;-webkit-text-stroke:0;">Rain</span>
<svg style="left:877.00px;top:557.50px;" width="11" height="7" viewBox="0 0 11 7"><path d="M0.800 6L5.400 1.400L10 6" fill="none" stroke="#d6d6d6" stroke-width="0.95"/></svg>
<svg style="left:894.00px;top:555.00px;" width="14" height="12" viewBox="0 0 14 12"><path d="M0.600 2.600h9.400M0.600 2.600v8.500h8" fill="none" stroke="#fff" stroke-width="1"/><path d="M10 0.500v4M8 2.500h4" stroke="#fff" stroke-width="0.9"/><path d="M3 5l3 2l-3 2z" fill="#fff"/><circle cx="10.500" cy="9" r="2.300" fill="#d9c9a8"/></svg>
<span style="left:914.00px;top:557.00px;font-size:9px;line-height:11px;color:#fff;letter-spacing:-0.768px;-webkit-text-stroke:0;">ENG</span>
<span style="left:944.00px;top:549.00px;font-size:9px;line-height:11px;color:#fff;letter-spacing:-0.217px;-webkit-text-stroke:0;">1:28 AM</span>
<span style="left:940.50px;top:563.00px;font-size:9px;line-height:11px;color:#fff;letter-spacing:-0.171px;-webkit-text-stroke:0;">8/14/2021</span>
<svg style="left:993.00px;top:555.00px;" width="19" height="19" viewBox="0 0 19 19"><path d="M0 0h12.400v9.600h-9l-1.400 1.600v-1.600h-2z" fill="#fff"/><path d="M2.600 2.400h7.400M2.600 4.600h7.400M2.600 6.900h4.500" stroke="#4a4442" stroke-width="0.9"/><circle cx="12" cy="11.800" r="5.600" fill="#1f1c1b" stroke="#6f6a68" stroke-width="0.9"/><text x="11.900" y="15.300" font-size="9.500" fill="#fff" text-anchor="middle" font-family="Liberation Sans, sans-serif">1</text></svg>
<div style="left:1020.00px;top:546.00px;width:1.00px;height:30.00px;background:#55504e;"></div>
<div style="left:391.50px;top:85.50px;width:241.00px;height:371.00px;background:#f0f0f0;border:1px solid rgba(125,135,158,0.6);box-shadow:0 2px 9px 0 rgba(0,0,0,0.22);"></div>
<div style="left:392.50px;top:86.50px;width:239.00px;height:21.00px;background:#fff;"></div>
<span style="left:398.60px;top:91.00px;font-size:9.3px;line-height:12px;color:#9c9c9c;letter-spacing:-0.173px;">Content Control Properties</span>
<span style="left:578.50px;top:91.00px;font-size:10px;line-height:12px;color:#8f8f8f;letter-spacing:-0.900px;-webkit-text-stroke:0;">?</span>
<svg style="left:610.60px;top:91.80px;" width="9" height="9" viewBox="0 0 9 9"><path d="M0.600 0.600L7.800 7.800M7.800 0.600L0.600 7.800" stroke="#8e8e8e" stroke-width="0.9"/></svg>
<span style="left:398.00px;top:114.00px;font-size:8.9px;line-height:11px;color:#1a1a1a;letter-spacing:-0.380px;">General</span>
<div style="left:431.00px;top:117.70px;width:195.00px;height:1.00px;background:#e2e2e2;"></div>
<span style="left:404.30px;top:131.00px;font-size:8.9px;line-height:11px;color:#000;letter-spacing:-0.209px;"><u>T</u>itle:</span>
<div style="left:446.00px;top:128.00px;width:139.50px;height:15.00px;background:#fff;border:1px solid #c0c0c0;"></div>
<span style="left:449.00px;top:131.00px;font-size:8.7px;line-height:11px;color:#000;letter-spacing:-0.537px;">DO YOU HAVE INSURANCE</span>
<span style="left:404.30px;top:148.00px;font-size:8.9px;line-height:11px;color:#000;letter-spacing:-0.156px;">T<u>a</u>g:</span>
<div style="left:446.00px;top:145.50px;width:139.50px;height:15.00px;background:#fff;border:1px solid #c0c0c0;"></div>
<span style="left:404.00px;top:165.00px;font-size:8.9px;line-height:11px;color:#000;letter-spacing:-0.301px;"><u>S</u>how as:</span>
<div style="left:446.30px;top:163.00px;width:71.50px;height:13.00px;background:#fff;border:1px solid #c0c0c0;"></div>
<span style="left:449.00px;top:165.00px;font-size:8.9px;line-height:11px;color:#000;letter-spacing:-0.202px;">Bounding Box</span>
<div style="left:504.00px;top:164.00px;width:12.80px;height:11.00px;background:#e3e3e3;"></div>
<svg style="left:507.50px;top:167.50px;" width="7" height="5" viewBox="0 0 7 5"><path d="M0.500 0.700L3.300 3.600L6.100 0.700" fill="none" stroke="#444" stroke-width="0.8"/></svg>
<span style="left:404.00px;top:184.00px;font-size:8.9px;line-height:11px;color:#000;letter-spacing:-0.173px;"><u>C</u>olor:</span>
<div style="left:435.40px;top:179.40px;width:30.40px;height:17.30px;background:#e1e1e1;border:1px solid #bcbcbc;"></div>
<svg style="left:438.50px;top:181.50px;" width="13" height="13" viewBox="0 0 13 13"><path d="M2 5.500L6 2l4.500 4.500L6.500 9.800z" fill="#fdfdfd" stroke="#777" stroke-width="0.8"/><path d="M4.500 3.300V1.500a1.300 1.300 0 0 1 2.600 0v2.800" fill="none" stroke="#777" stroke-width="0.8"/><path d="M9.300 4.500c2.600 1.800 3.300 4 2 5.300c-1.400-0.300-1.800-1.800-2-5.300z" fill="#3b7bd0"/><rect x="0.800" y="10.500" width="11.400" height="2.200" fill="#5a5a5a"/></svg>
<svg style="left:455.50px;top:186.80px;" width="6" height="4" viewBox="0 0 6 4"><path d="M0.300 0.300h5.400L3 3.300z" fill="#111"/></svg>
<div style="left:403.30px;top:201.30px;width:9.40px;height:9.50px;background:#fff;border:1px solid #4d4d4d;"></div>
<span style="left:418.70px;top:201.00px;font-size:8.9px;line-height:11px;color:#000;letter-spacing:-0.057px;"><u>U</u>se a style to format text typed into the empty control</span>
<span style="left:417.70px;top:216.00px;font-size:8.9px;line-height:11px;color:#8a8a8a;letter-spacing:-0.593px;"><u>S</u>tyle:</span>
<div style="left:445.20px;top:214.70px;width:109.50px;height:13.30px;background:#f3f3f3;border:1px solid #c3c3c3;"></div>
<span style="left:448.00px;top:216.00px;font-size:8.9px;line-height:11px;color:#838383;letter-spacing:-0.105px;">Default Paragraph Font</span>
<div style="left:540.80px;top:215.70px;width:12.90px;height:11.30px;background:#e3e3e3;border:1px solid #bdbdbd;"></div>
<svg style="left:544.00px;top:219.50px;" width="7" height="5" viewBox="0 0 7 5"><path d="M0.500 0.700L3.300 3.600L6.100 0.700" fill="none" stroke="#444" stroke-width="0.8"/></svg>
<span style="left:397.50px;top:270.00px;font-size:8.9px;line-height:11px;color:#1a1a1a;letter-spacing:-0.597px;">Locking</span>
<span style="left:398.00px;top:318.00px;font-size:8.9px;line-height:11px;color:#1a1a1a;letter-spacing:-0.151px;">Drop-Down <u>L</u>ist Properties</span>
<div style="left:502.00px;top:321.50px;width:124.00px;height:1.00px;background:#e3e3e3;"></div>
<div style="left:403.00px;top:332.50px;width:156.30px;height:95.30px;background:#fff;border:1px solid #9aa0ad;"></div>
<div style="left:484.20px;top:334.00px;width:1.00px;height:14.50px;background:#e5e5e5;"></div>
<div style="left:558.00px;top:334.00px;width:1.00px;height:14.50px;background:#e5e5e5;"></div>
<span style="left:407.80px;top:337.00px;font-size:8.6px;line-height:11px;color:#333;letter-spacing:-0.194px;">Display Name</span>
<span style="left:488.00px;top:337.00px;font-size:8.6px;line-height:11px;color:#333;letter-spacing:0.129px;">Value</span>
<span style="left:406.80px;top:350.00px;font-size:8.6px;line-height:11px;color:#000;letter-spacing:-0.048px;">Choose an item.</span>
<span style="left:406.80px;top:361.00px;font-size:8.6px;line-height:11px;color:#000;letter-spacing:-0.027px;">Health</span>
<span style="left:486.80px;top:361.00px;font-size:8.6px;line-height:11px;color:#000;letter-spacing:-0.027px;">Health</span>
<span style="left:406.80px;top:372.00px;font-size:8.6px;line-height:11px;color:#000;letter-spacing:-0.291px;">Life</span>
<span style="left:486.80px;top:372.00px;font-size:8.6px;line-height:11px;color:#000;letter-spacing:-0.291px;">Life</span>
<div style="left:567.00px;top:333.50px;width:59.80px;height:15.30px;background:#e1e1e1;border:1px solid #b9b9b9;"></div>
<span style="left:585.40px;top:336.00px;font-size:8.7px;line-height:11px;color:#000;letter-spacing:0.045px;"><u>A</u>dd...</span>
<div style="left:567.00px;top:353.00px;width:59.80px;height:15.20px;background:#dcdcdc;border:1px solid #cbcbcb;"></div>
<span style="left:579.90px;top:356.00px;font-size:8.7px;line-height:11px;color:#8d8d8d;letter-spacing:0.197px;"><u>M</u>odify...</span>
<div style="left:567.00px;top:372.50px;width:59.80px;height:15.20px;background:#dcdcdc;border:1px solid #cbcbcb;"></div>
<span style="left:581.90px;top:375.00px;font-size:8.7px;line-height:11px;color:#8d8d8d;letter-spacing:-0.399px;">Rem<u>o</u>ve</span>
<div style="left:567.00px;top:392.00px;width:59.80px;height:15.20px;background:#dcdcdc;border:1px solid #cbcbcb;"></div>
<span style="left:579.90px;top:395.00px;font-size:8.7px;line-height:11px;color:#8d8d8d;letter-spacing:-0.116px;">Move U<u>p</u></span>
<div style="left:567.00px;top:411.50px;width:59.80px;height:15.30px;background:#dcdcdc;border:1px solid #cbcbcb;"></div>
<span style="left:573.90px;top:414.00px;font-size:8.7px;line-height:11px;color:#8d8d8d;letter-spacing:0.007px;">Move Do<u>w</u>n</span>
<div style="left:509.50px;top:434.30px;width:54.00px;height:15.50px;background:#e1e1e1;border:1px solid #b9b9b9;"></div>
<span style="left:530.75px;top:437.00px;font-size:8.7px;line-height:11px;color:#000;letter-spacing:-0.535px;">OK</span>
<div style="left:572.00px;top:434.30px;width:54.80px;height:15.50px;background:#e1e1e1;border:1px solid #b9b9b9;"></div>
<span style="left:586.65px;top:437.00px;font-size:8.7px;line-height:11px;color:#000;letter-spacing:-0.264px;">Cancel</span>
<div style="left:401.30px;top:227.30px;width:222.70px;height:86.30px;background:#f0f0f0;border:1px solid #9d9d9d;box-shadow:0 3px 9px 0 rgba(0,0,0,0.33);"></div>
<div style="left:402.30px;top:228.30px;width:220.70px;height:21.70px;background:#fff;"></div>
<span style="left:408.20px;top:233.00px;font-size:9.3px;line-height:12px;color:#000;letter-spacing:-0.228px;">Add Choice</span>
<span style="left:569.80px;top:233.00px;font-size:9.4px;line-height:12px;color:#000;letter-spacing:-0.728px;">?</span>
<svg style="left:601.60px;top:234.30px;" width="9" height="9" viewBox="0 0 9 9"><path d="M0.500 0.500L7.900 7.700M7.900 0.500L0.500 7.700" stroke="#111" stroke-width="1.100"/></svg>
<span style="left:407.60px;top:256.00px;font-size:8.9px;line-height:11px;color:#000;letter-spacing:-0.421px;">Display <u>N</u>ame:</span>
<div style="left:468.80px;top:256.00px;width:150.20px;height:14.20px;background:#fff;border:1px solid #c0c0c0;"></div>
<span style="left:471.20px;top:258.00px;font-size:8.9px;line-height:11px;color:#000;letter-spacing:-0.063px;">Motor Vehicle</span>
<div style="left:524.80px;top:258.50px;width:0.80px;height:9.50px;background:#000;"></div>
<span style="left:407.60px;top:273.00px;font-size:8.9px;line-height:11px;color:#000;letter-spacing:-0.246px;"><u>V</u>alue:</span>
<div style="left:468.80px;top:273.00px;width:150.20px;height:14.20px;background:#fff;border:1px solid #c0c0c0;"></div>
<span style="left:471.20px;top:275.00px;font-size:8.9px;line-height:11px;color:#000;letter-spacing:-0.063px;">Motor Vehicle</span>
<div style="left:500.00px;top:291.00px;width:54.70px;height:15.30px;background:#e1e1e1;border:1.3px solid #2a7fd4;"></div>
<div style="left:501.00px;top:292.00px;width:52.70px;height:13.30px;border:1px dotted #222;opacity:0.4;"></div>
<span style="left:521.60px;top:294.00px;font-size:8.7px;line-height:11px;color:#000;letter-spacing:-0.535px;">OK</span>
<div style="left:563.00px;top:291.00px;width:55.00px;height:15.30px;background:#e1e1e1;border:1px solid #b9b9b9;"></div>
<span style="left:577.75px;top:294.00px;font-size:8.7px;line-height:11px;color:#000;letter-spacing:-0.264px;">Cancel</span>
</div>
</body>
</html>
